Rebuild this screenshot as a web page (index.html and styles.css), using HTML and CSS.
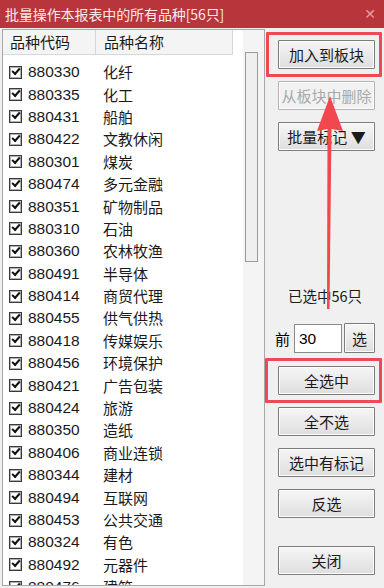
FILE: index.html
```html
<!DOCTYPE html>
<html>
<head>
	<meta charset="UTF-8">
	<title>批量操作</title>
	<link rel="stylesheet" href="styles.css">
</head>
<body>
	<div class="titlebar">
		<span class="title">批量操作本报表中的所有品种[56只]</span>
		<span class="close">&#x2715;</span>
	</div>
	<div class="main">
		<div class="list">
			<div class="listInner">
				<div class="head">
					<div class="hCode">品种代码</div>
					<div class="hName">品种名称</div>
				</div>
				<div class="rows">
					<div class="row"><span class="cb"></span><span class="code">880330</span><span class="name">化纤</span></div>
					<div class="row"><span class="cb"></span><span class="code">880335</span><span class="name">化工</span></div>
					<div class="row"><span class="cb"></span><span class="code">880431</span><span class="name">船舶</span></div>
					<div class="row"><span class="cb"></span><span class="code">880422</span><span class="name">文教休闲</span></div>
					<div class="row"><span class="cb"></span><span class="code">880301</span><span class="name">煤炭</span></div>
					<div class="row"><span class="cb"></span><span class="code">880474</span><span class="name">多元金融</span></div>
					<div class="row"><span class="cb"></span><span class="code">880351</span><span class="name">矿物制品</span></div>
					<div class="row"><span class="cb"></span><span class="code">880310</span><span class="name">石油</span></div>
					<div class="row"><span class="cb"></span><span class="code">880360</span><span class="name">农林牧渔</span></div>
					<div class="row"><span class="cb"></span><span class="code">880491</span><span class="name">半导体</span></div>
					<div class="row"><span class="cb"></span><span class="code">880414</span><span class="name">商贸代理</span></div>
					<div class="row"><span class="cb"></span><span class="code">880455</span><span class="name">供气供热</span></div>
					<div class="row"><span class="cb"></span><span class="code">880418</span><span class="name">传媒娱乐</span></div>
					<div class="row"><span class="cb"></span><span class="code">880456</span><span class="name">环境保护</span></div>
					<div class="row"><span class="cb"></span><span class="code">880421</span><span class="name">广告包装</span></div>
					<div class="row"><span class="cb"></span><span class="code">880424</span><span class="name">旅游</span></div>
					<div class="row"><span class="cb"></span><span class="code">880350</span><span class="name">造纸</span></div>
					<div class="row"><span class="cb"></span><span class="code">880406</span><span class="name">商业连锁</span></div>
					<div class="row"><span class="cb"></span><span class="code">880344</span><span class="name">建材</span></div>
					<div class="row"><span class="cb"></span><span class="code">880494</span><span class="name">互联网</span></div>
					<div class="row"><span class="cb"></span><span class="code">880453</span><span class="name">公共交通</span></div>
					<div class="row"><span class="cb"></span><span class="code">880324</span><span class="name">有色</span></div>
					<div class="row"><span class="cb"></span><span class="code">880492</span><span class="name">元器件</span></div>
					<div class="row"><span class="cb"></span><span class="code">880476</span><span class="name">建筑</span></div>
				</div>
			</div>
			<div class="scroll">
				<div class="thumb"></div>
			</div>
		</div>
		<div class="side">
			<button class="btn b1">加入到板块</button>
			<button class="btn b2" disabled>从板块中删除</button>
			<button class="btn b3">批量标记 ▼</button>
			<div class="count">已选中56只</div>
			<div class="topN">
				<span class="qian">前</span>
				<span class="num">30</span>
				<button class="btn sel">选</button>
			</div>
			<button class="btn b4">全选中</button>
			<button class="btn b5">全不选</button>
			<button class="btn b5">选中有标记</button>
			<button class="btn b5">反选</button>
			<button class="btn b6">关闭</button>
		</div>
	</div>

	<!-- 标注 -->
	<div class="mark m1"></div>
	<div class="mark m2"></div>
	<svg class="arrow" width="384" height="588" viewBox="0 0 384 588">
		<polygon points="330,96 343,131 331.5,129 329.5,309 327,309 327.5,129 317,131" fill="#f2474f"/>
	</svg>
</body>
</html>
```

FILE: styles.css
```css
body {
	margin: 0;
	width: 384px;
	height: 588px;
	overflow: hidden;
	background: #f0f0f0;
	font-family: "Liberation Sans", "Noto Sans CJK SC", sans-serif;
	position: relative;
}

.titlebar {
	height: 28px;
	background: #b7353b;
	display: flex;
	align-items: center;
	justify-content: space-between;
	padding: 0 8px 0 5px;
}

.title {
	color: #fbeaea;
	font-family: "Noto Sans CJK SC", sans-serif;
	font-size: 14px;
	line-height: 28px;
	letter-spacing: -0.1px;
}

.close {
	color: #e3a0a3;
	font-size: 14px;
	font-family: "DejaVu Sans", sans-serif;
}

.main {
	display: flex;
	height: 560px;
}

.list {
	margin: 1px 0 2px 2px;
	width: 261px;
	border: 1px solid #a8a8a8;
	background: #fff;
	display: flex;
	overflow: hidden;
}

.listInner {
	width: 240px;
	overflow: hidden;
}

.head {
	display: flex;
	width: 230px;
	height: 24px;
	background: #f4f4f4;
	border-bottom: 1px solid #d8d8d8;
	font-family: "Noto Sans CJK SC", sans-serif;
	font-size: 15px;
	line-height: 23px;
	color: #1a1a1a;
}

.hCode {
	width: 85px;
	padding-left: 7px;
	border-right: 1px solid #d6d6d6;
}

.hName {
	padding-left: 8px;
	flex: 1;
	border-right: 1px solid #d6d6d6;
}

.rows {
	padding-top: 6px;
}

.row {
	display: flex;
	align-items: center;
	height: 22.4px;
	color: #1a1a1a;
}

.cb {
	width: 11px;
	height: 11px;
	margin-left: 6px;
	border: 1px solid #3a3a3a;
	box-shadow: inset 0 0 0 1px #b0b0b0;
	background: #fff;
	position: relative;
}

.cb::after {
	content: "";
	position: absolute;
	left: 2px;
	top: 1px;
	width: 6px;
	height: 3px;
	border-left: 2px solid #111;
	border-bottom: 2px solid #111;
	transform: rotate(-48deg);
}

.code {
	width: 75px;
	margin-left: 6px;
	font-size: 15.5px;
	line-height: 20px;
}

.name {
	font-family: "Noto Sans CJK SC", sans-serif;
	font-size: 15px;
	line-height: 20px;
}

.scroll {
	width: 21px;
	background: #f4f4f4;
	padding-top: 22px;
}

.thumb {
	margin-left: 2px;
	width: 11px;
	height: 208px;
	border: 1px solid #9a9a9a;
	background: #efefef;
}

.side {
	flex: 1;
	display: flex;
	flex-direction: column;
	padding-left: 12px;
	margin-left: 1px;
}

.btn {
	width: 97px;
	height: 29px;
	padding: 0;
	border: 1px solid #7c7c7c;
	border-radius: 1px;
	background: linear-gradient(#f6f6f6, #dedede);
	box-shadow: inset 0 0 0 1px #fcfcfc;
	font-family: "Noto Sans CJK SC", sans-serif;
	font-size: 15px;
	color: #1a1a1a;
}

.btn:disabled {
	color: #a8a8a8;
	border-color: #b4b4b4;
	background: #f2f2f2;
}

.b1 {
	margin-top: 12px;
}

.b2, .b3 {
	margin-top: 12px;
}

.count {
	margin-top: 133px;
	padding-left: 10px;
	font-family: "Noto Sans CJK SC", sans-serif;
	font-size: 14.5px;
	line-height: 24px;
	color: #1a1a1a;
}

.topN {
	display: flex;
	align-items: center;
	margin-top: 15px;
	margin-left: -3px;
	height: 30px;
}

.qian {
	font-family: "Noto Sans CJK SC", sans-serif;
	font-size: 15px;
	width: 19px;
}

.num {
	width: 42px;
	height: 27px;
	border: 1px solid #8a8a8a;
	background: #fff;
	font-size: 15.5px;
	line-height: 27px;
	padding-left: 4px;
}

.sel {
	width: 31px;
	margin-left: 2px;
	height: 30px;
}

.b4 {
	margin-top: 13px;
}

.b5 {
	margin-top: 12px;
}

.b6 {
	margin-top: 28px;
}

.mark {
	position: absolute;
	border: 3px solid #ef4a52;
	border-radius: 1px;
}

.m1 {
	left: 266px;
	top: 32px;
	width: 110px;
	height: 39px;
}

.m2 {
	left: 265px;
	top: 358px;
	width: 111px;
	height: 39px;
}

.arrow {
	position: absolute;
	left: 0;
	top: 0;
	pointer-events: none;
}
```
